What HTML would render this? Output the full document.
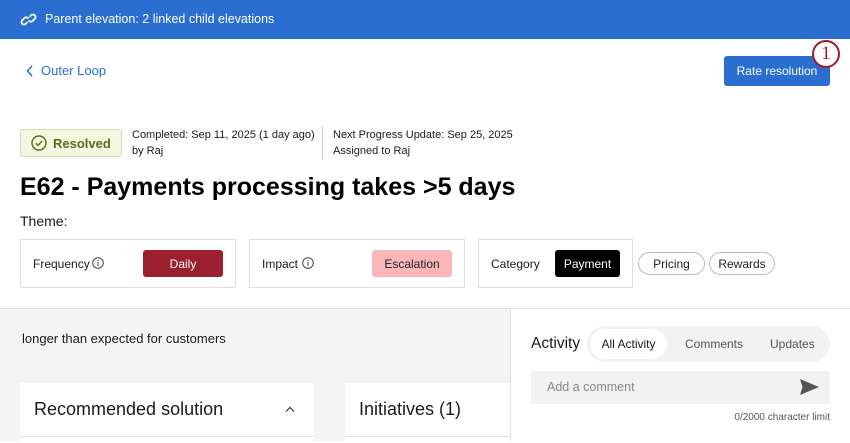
<!DOCTYPE html>
<html><head><meta charset="utf-8"><style>
*{box-sizing:border-box;margin:0;padding:0}
body{width:850px;height:441px;overflow:hidden;background:#fff;font-family:"Liberation Sans",sans-serif;color:#1a1a1a;position:relative}
.a{position:absolute;white-space:nowrap}
.box{position:absolute;border:1px solid #dedede;background:#fff}
.pill{position:absolute;border-radius:3px;font-size:12px;display:flex;align-items:center;justify-content:center}
</style></head><body>
<div class="a" style="left:0;top:0;width:850px;height:39px;background:#2a6fd0"></div>
<svg class="a" style="left:20px;top:12px" width="17" height="15" viewBox="0 0 17 15" fill="none" stroke="#fff" stroke-width="1.8" stroke-linecap="round"><path d="M7 10.5l-1.5 1.5a2.5 2.5 0 0 1-3.5-3.5l2.5-2.5a2.5 2.5 0 0 1 3.5 0"/><path d="M10 4.5l1.5-1.5a2.5 2.5 0 0 1 3.5 3.5l-2.5 2.5a2.5 2.5 0 0 1-3.5 0"/></svg>
<div class="a" style="left:45px;top:12px;font-size:12.5px;color:#fff">Parent elevation: 2 linked child elevations</div>

<svg class="a" style="left:26px;top:65px" width="8" height="12" viewBox="0 0 8 12"><path d="M6 1L1.5 6 6 11" fill="none" stroke="#2a6fd0" stroke-width="1.5"/></svg>
<div class="a" style="left:41px;top:63px;font-size:13px;color:#2a6fd0">Outer Loop</div>

<div class="a" style="left:724px;top:56px;width:106px;height:30px;background:#2a6fd0;border-radius:3px;color:#fff;font-size:12px;display:flex;align-items:center;justify-content:center">Rate resolution</div>
<div class="a" style="left:812px;top:40px;width:28px;height:28px;border-radius:50%;background:#fff;border:2px solid #a01c2c;color:#a01c2c;font-size:19px;display:flex;align-items:center;justify-content:center;font-family:'Liberation Serif',serif">1</div>

<div class="a" style="left:20px;top:129px;width:102px;height:28px;background:#f4f6df;border:1px solid #d9ddb2;border-radius:3px"></div>
<svg class="a" style="left:31px;top:135px" width="16" height="16" viewBox="0 0 16 16" fill="none" stroke="#5b6b1a" stroke-width="1.4"><circle cx="8" cy="8" r="7"/><path d="M4.8 8.2l2.2 2.2 4.2-4.4"/></svg>
<div class="a" style="left:53px;top:136px;font-size:13px;font-weight:bold;color:#5b6b1a">Resolved</div>
<div class="a" style="left:132px;top:127px;font-size:11px;line-height:16px">Completed: Sep 11, 2025 (1 day ago)<br>by Raj</div>
<div class="a" style="left:322px;top:126px;width:1px;height:34px;background:#ccc"></div>
<div class="a" style="left:333px;top:127px;font-size:11px;line-height:16px">Next Progress Update: Sep 25, 2025<br>Assigned to Raj</div>

<div class="a" style="left:20px;top:173px;font-size:25px;font-weight:bold;color:#000">E62 - Payments processing takes &gt;5 days</div>
<div class="a" style="left:20px;top:213px;font-size:14px">Theme:</div>

<div class="box" style="left:20px;top:239px;width:216px;height:49px"></div>
<div class="a" style="left:33px;top:257px;font-size:12px">Frequency</div>
<svg class="a" style="left:92px;top:257px" width="12" height="12" viewBox="0 0 12 12" fill="none" stroke="#444"><circle cx="6" cy="6" r="5.3"/><path d="M6 5v4M6 3v1"/></svg>
<div class="pill" style="left:143px;top:250px;width:80px;height:27px;background:#9b1f2e;color:#fff">Daily</div>

<div class="box" style="left:249px;top:239px;width:216px;height:49px"></div>
<div class="a" style="left:262px;top:257px;font-size:12px">Impact</div>
<svg class="a" style="left:302px;top:257px" width="12" height="12" viewBox="0 0 12 12" fill="none" stroke="#444"><circle cx="6" cy="6" r="5.3"/><path d="M6 5v4M6 3v1"/></svg>
<div class="pill" style="left:372px;top:250px;width:80px;height:27px;background:#f8b6b9;color:#222">Escalation</div>

<div class="box" style="left:478px;top:239px;width:155px;height:49px"></div>
<div class="a" style="left:491px;top:257px;font-size:12px">Category</div>
<div class="pill" style="left:555px;top:250px;width:65px;height:27px;background:#000;color:#fff">Payment</div>
<div class="pill" style="left:638px;top:252px;width:67px;height:23px;border:1px solid #bbb;border-radius:12px;color:#222">Pricing</div>
<div class="pill" style="left:709px;top:252px;width:66px;height:23px;border:1px solid #bbb;border-radius:12px;color:#222">Rewards</div>

<div class="a" style="left:0;top:308px;width:850px;height:133px;background:#f4f4f4;border-top:1px solid #e2e2e2"></div>
<div class="a" style="left:22px;top:331px;font-size:13px">longer than expected for customers</div>
<div class="a" style="left:20px;top:383px;width:294px;height:60px;background:#fff"></div>
<div class="a" style="left:20px;top:436px;width:294px;height:1px;background:#e2e2e2"></div>
<div class="a" style="left:34px;top:399px;font-size:18px">Recommended solution</div>
<svg class="a" style="left:285px;top:406px" width="10" height="7" viewBox="0 0 10 7"><path d="M1 5.5L5 1.5 9 5.5" fill="none" stroke="#333" stroke-width="1.2"/></svg>
<div class="a" style="left:345px;top:383px;width:165px;height:60px;background:#fff"></div>
<div class="a" style="left:345px;top:436px;width:165px;height:1px;background:#e2e2e2"></div>
<div class="a" style="left:359px;top:399px;font-size:18px">Initiatives (1)</div>

<div class="a" style="left:510px;top:309px;width:340px;height:132px;background:#fff;border-left:1px solid #e2e2e2"></div>
<div class="a" style="left:531px;top:335px;font-size:15.5px">Activity</div>
<div class="a" style="left:587px;top:326px;width:243px;height:36px;background:#f2f2f2;border-radius:18px"></div>
<div class="a" style="left:590px;top:329px;width:77px;height:30px;background:#fff;border-radius:15px;font-size:12px;display:flex;align-items:center;justify-content:center">All Activity</div>
<div class="a" style="left:685px;top:337px;font-size:12px;color:#555">Comments</div>
<div class="a" style="left:770px;top:337px;font-size:12px;color:#555">Updates</div>
<div class="a" style="left:531px;top:371px;width:299px;height:33px;background:#f2f2f2;border-radius:3px"></div>
<div class="a" style="left:547px;top:380px;font-size:12.5px;color:#888">Add a comment</div>
<svg class="a" style="left:800px;top:379px" width="19" height="16" viewBox="0 0 19 16"><path d="M0 0L19 8 0 16 2.5 8z" fill="#555"/></svg>
<div class="a" style="left:700px;top:412px;width:130px;text-align:right;font-size:10px;color:#555">0/2000 character limit</div>
</body></html>
